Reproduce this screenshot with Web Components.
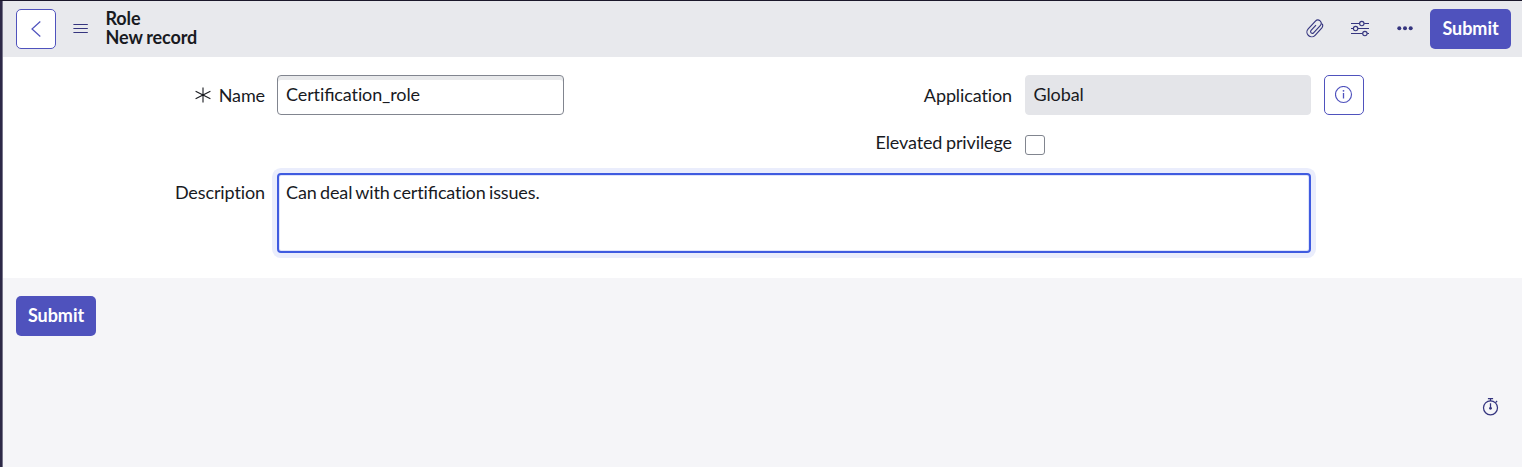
<!DOCTYPE html>
<html lang="en">
<head>
<meta charset="utf-8">
<title>Role | New record</title>
<style>
html,body{margin:0;height:100%;overflow:hidden}
body{font-family:Lato,"Liberation Sans",sans-serif;font-size:18px;color:#181a1f}
</style>
</head>
<body>
<record-page></record-page>
<script>
const define = (name, html) => {
  const template = document.createElement('template');
  template.innerHTML = html;
  customElements.define(name, class extends HTMLElement {
    constructor() {
      super();
      this.attachShadow({mode: 'open'}).append(template.content.cloneNode(true));
    }
  });
};

define('primary-button', `
<style>
:host{display:block}
button{display:block;width:100%;height:40px;border:0;border-radius:5px;padding:0 0 3px;background:#4f52bd;color:#fff;font:bold 18px/24px Lato,"Liberation Sans",sans-serif;letter-spacing:-.05px}
</style><button><slot></slot></button>`);

define('outline-button', `
<style>
:host{display:block;width:40px;height:40px}
button{display:flex;align-items:center;justify-content:center;box-sizing:border-box;width:40px;height:40px;padding:0;border:1px solid #4f52bd;border-radius:5px;background:#fff}
</style><button><slot></slot></button>`);

define('record-header', `
<style>
:host{display:flex;align-items:center;box-sizing:border-box;height:56px;padding:0 11px 0 13px;background:#e8e9ed}
svg{display:block;fill:none;stroke:#35357f;flex:none}
.menu{margin-left:17px}
h1{margin:-2px auto 0 16.5px;font-size:18px;line-height:19px;font-weight:bold;letter-spacing:-.1px;word-spacing:-.4px}
h1 span{display:block}
primary-button{width:81px;margin-left:16px}
</style>
<outline-button><svg width="18" height="18" viewBox="0 0 18 18" style="stroke:#4f52bd"><path d="M13.3 1.5 5 9l8.3 7.5" stroke-width="1.2"/></svg></outline-button>
<svg class="menu" width="16" height="16" viewBox="0 0 16 16"><path d="M.4 3.5h14.4M.4 7.5h14.4M.4 11.5h14.4" stroke-width="1.2"/></svg>
<h1><span>Role</span><span>New record</span></h1>
<svg width="20" height="20" viewBox="0 0 20 20"><g transform="translate(-.5 0) rotate(43 10 10)"><path d="M14.7 5.2v9a4.7 4.7 0 0 1-9.4 0V3.6a3.3 3.3 0 0 1 6.6 0v9.8a1.7 1.7 0 0 1-3.4 0V6.2M14.7 5.2V4.5A4.2 4.2 0 0 0 12 .8" stroke-width="1.15"/></g></svg>
<svg width="20" height="20" viewBox="0 0 20 20" style="margin-left:25px"><g stroke-width="1.15"><path d="M1 4.5h8.5M14.2 4.5H19M1 9.5h2.3M8 9.5h11M1 14.5h11.5M17.2 14.5H19"/><circle cx="11.8" cy="4.5" r="2.2"/><circle cx="5.6" cy="9.5" r="2.2"/><circle cx="14.9" cy="14.5" r="2.2"/></g></svg>
<svg width="18" height="18" viewBox="0 0 18 18" style="margin-left:26px;stroke:none;fill:#35357f"><circle cx="3.3" cy="8.2" r="2"/><circle cx="9" cy="8.2" r="2"/><circle cx="14.7" cy="8.2" r="2"/></svg>
<primary-button>Submit</primary-button>`);

define('field-label', `
<style>
:host{display:flex;justify-content:flex-end;align-items:center;gap:8px;line-height:24px;white-space:nowrap}
svg{display:none}
:host([required]) svg{display:block}
</style><svg width="16" height="16" viewBox="0 0 16 16" fill="none" stroke="#181a1f"><path d="M8 .5v15M.6 4.2l14.8 7.6M15.4 4.2.6 11.8" stroke-width="1.1"/></svg><span><slot></slot></span>`);

define('text-field', `
<style>
:host{display:block;box-sizing:border-box;height:40px;border:1px solid #81858f;border-radius:4px;background:#fff;box-shadow:inset 0 4px #e8e9eb;padding:6px 8px;line-height:24px}
:host([readonly]){border-color:#e4e5e9;background:#e4e5e9;box-shadow:none;padding-left:7.5px}
:host([multiline]){height:80px;border:2px solid #3f5be0;box-shadow:0 0 0 5px #eaedfc,inset 0 0 0 1px #dfe4fa;padding:5px 7px}
</style><slot></slot>`);

define('check-field', `
<style>
:host{display:block;box-sizing:border-box;width:20px;height:20px;border:1px solid #81858f;border-radius:3px;background:#fff}
</style>`);

define('role-form', `
<style>
:host{display:grid;box-sizing:border-box;height:221px;padding-top:18px;background:#fff;grid-template-columns:262px 12px 287px 448px 13px 286px 13px 40px;grid-template-rows:40px 58px 80px;align-items:start;letter-spacing:-.11px;word-spacing:-.9px}
.fi{font-feature-settings:"liga" 1}
.name{grid-area:1/1;margin-top:8px}
.name-value{grid-area:1/3}
.app{grid-area:1/4;margin-top:8px}
.app-value{grid-area:1/6}
.info{grid-area:1/8}
.elevated{grid-area:2/4;margin-top:15px}
.elevated-value{grid-area:2/6;margin-top:20px}
.description{grid-area:3/1;margin-top:7px}
.description-value{grid-area:3/3/4/7;letter-spacing:-.13px;word-spacing:-1.1px}
</style>
<field-label class="name" required>Name</field-label>
<text-field class="name-value">Certi<span class="fi">fi</span>cation_role</text-field>
<field-label class="app">Application</field-label>
<text-field class="app-value" readonly>Global</text-field>
<outline-button class="info"><svg width="18" height="18" viewBox="0 0 18 18" fill="none" stroke="#4f52bd"><circle cx="8.5" cy="8.5" r="8" stroke-width="1.15"/><path d="M8.5 7v5.5" stroke-width="1.3"/><circle cx="8.5" cy="4.8" r=".9" fill="#4f52bd" stroke="none"/></svg></outline-button>
<field-label class="elevated">Elevated privilege</field-label>
<check-field class="elevated-value"></check-field>
<field-label class="description">Description</field-label>
<text-field class="description-value" multiline>Can deal with certi<span class="fi">fi</span>cation issues.</text-field>`);

define('page-footer', `
<style>
:host{display:flex;align-items:flex-start;justify-content:space-between;flex:1;padding:18px 22px 0 13px;background:#f5f5f8}
primary-button{width:80px}
svg{margin-top:101px;fill:none;stroke:#35357f}
</style>
<primary-button>Submit</primary-button>
<svg width="18" height="20" viewBox="0 0 18 20"><g stroke-width="1.25"><circle cx="8.5" cy="10.8" r="7"/><path d="M5.9 1.7h5.2M8.5 1.7V4M13.5 5.6l1.6-1.6M8.5 6.3v5"/></g><circle cx="8.5" cy="11.3" r="1.4" fill="#35357f" stroke="none"/></svg>`);

define('record-page', `
<style>
:host{display:flex;flex-direction:column;box-sizing:border-box;height:100%;border-top:1px solid #1b182b;padding-left:3px;background:linear-gradient(90deg,#2d2947 2px,#77758a 2px,#77758a 3px,#fff 3px)}
</style>
<record-header></record-header><role-form></role-form><page-footer></page-footer>`);
</script>
</body>
</html>
